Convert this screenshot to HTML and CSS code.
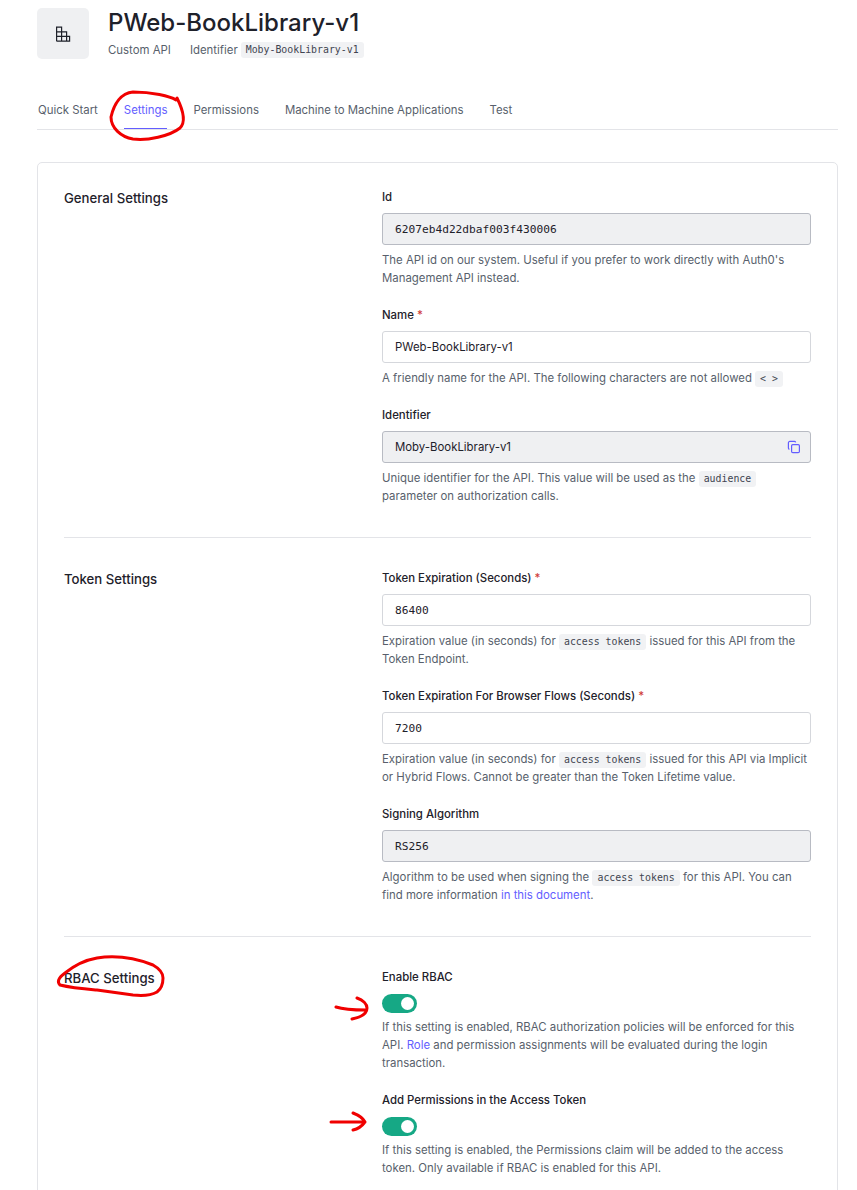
FILE: index.html
```html
<!DOCTYPE html>
<html lang="en">
<head>
    <meta charset="UTF-8">
    <meta name="viewport" content="width=device-width, initial-scale=1.0">
    <title>PWeb-BookLibrary-v1</title>
    <link rel="stylesheet" href="styles.css">
</head>
<body>
    <div class="page">
        <header class="api-header">
            <div class="api-icon">
                <svg width="18" height="18" viewBox="0 0 18 18" fill="none" stroke="#1e212a" stroke-width="1.2">
                    <path d="M2.6 16.2V2.2h5v14M2.6 6.8h10v9.4M2.6 11.4h13v4.8H2.6M7.6 6.8v9.4M12.6 6.8v9.4"/>
                </svg>
            </div>
            <div>
                <h1>PWeb-BookLibrary-v1</h1>
                <div class="api-meta">
                    <span class="api-type">Custom API</span>
                    <span>Identifier</span>
                    <code class="tag">Moby-BookLibrary-v1</code>
                </div>
            </div>
        </header>

        <nav class="tabs">
            <a>Quick Start</a>
            <a class="active">Settings</a>
            <a>Permissions</a>
            <a>Machine to Machine Applications</a>
            <a>Test</a>
        </nav>

        <main class="card">
            <section class="group">
                <h2>General Settings</h2>
                <div class="fields">
                    <div class="field">
                        <label>Id</label>
                        <div class="input readonly mono">6207eb4d22dbaf003f430006</div>
                        <p class="help">The API id on our system. Useful if you prefer to work directly with Auth0's Management API instead.</p>
                    </div>
                    <div class="field">
                        <label>Name <span class="req">*</span></label>
                        <div class="input">PWeb-BookLibrary-v1</div>
                        <p class="help">A friendly name for the API. The following characters are not allowed <code class="tag">&lt; &gt;</code></p>
                    </div>
                    <div class="field">
                        <label>Identifier</label>
                        <div class="input readonly">
                            Moby-BookLibrary-v1
                            <svg class="copy" width="14" height="14" viewBox="0 0 14 14" fill="none" stroke="#635dff" stroke-width="1.2">
                                <rect x="4.6" y="4.6" width="7.8" height="8" rx="1.2"/>
                                <path d="M2.4 9.4C1.8 9.2 1.4 8.7 1.4 8V2.8c0-.8.6-1.4 1.4-1.4h4.6c.6 0 1.1.4 1.3 1"/>
                            </svg>
                        </div>
                        <p class="help">Unique identifier for the API. This value will be used as the <code class="tag">audience</code> parameter on authorization calls.</p>
                    </div>
                </div>
            </section>

            <section class="group">
                <h2>Token Settings</h2>
                <div class="fields">
                    <div class="field">
                        <label>Token Expiration (Seconds) <span class="req">*</span></label>
                        <div class="input mono">86400</div>
                        <p class="help">Expiration value (in seconds) for <code class="tag">access tokens</code> issued for this API from the Token Endpoint.</p>
                    </div>
                    <div class="field">
                        <label>Token Expiration For Browser Flows (Seconds) <span class="req">*</span></label>
                        <div class="input mono">7200</div>
                        <p class="help">Expiration value (in seconds) for <code class="tag">access tokens</code> issued for this API via Implicit or Hybrid Flows. Cannot be greater than the Token Lifetime value.</p>
                    </div>
                    <div class="field">
                        <label>Signing Algorithm</label>
                        <div class="input readonly mono">RS256</div>
                        <p class="help">Algorithm to be used when signing the <code class="tag">access tokens</code> for this API. You can find more information <a class="link">in this document</a>.</p>
                    </div>
                </div>
            </section>

            <section class="group">
                <h2>RBAC Settings</h2>
                <div class="fields">
                    <div class="field">
                        <label>Enable RBAC</label>
                        <div class="toggle"></div>
                        <p class="help">If this setting is enabled, RBAC authorization policies will be enforced for this API. <a class="link">Role</a> and permission assignments will be evaluated during the login transaction.</p>
                    </div>
                    <div class="field">
                        <label>Add Permissions in the Access Token</label>
                        <div class="toggle"></div>
                        <p class="help">If this setting is enabled, the Permissions claim will be added to the access token. Only available if RBAC is enabled for this API.</p>
                    </div>
                </div>
            </section>
        </main>
    </div>

    <!-- hand drawn marks on top of the screenshot -->
    <svg class="marks" width="857" height="1190" viewBox="0 0 857 1190" fill="none" stroke="#f00000" stroke-width="3" stroke-linecap="round" stroke-linejoin="round">
        <path d="M176 100C170 96 152 92 133 92C121 93 114 104 111 117C111 128 121 137 133 139C147 141 170 136 180 128C186 122 184 112 177 98"/>
        <path d="M60 985C57 982 58 978 65 973C75 965 85 960 97 958C110 956 130 956 153 965C160 969 163 973 163 978C163 985 161 989 157 992C150 996 142 996 133 995L97 990C85 989 72 988 60 985"/>
        <path d="M336 1007C345 1010 354 1010 366 1010M357 998C363 1000 367 1004 367 1008C367 1013 362 1017 352 1019"/>
        <path d="M331 1122H365M353 1113C358 1115 363 1118 365 1122C362 1126 358 1129 353 1130"/>
    </svg>
</body>
</html>
```

FILE: styles.css
```css
* {
    margin: 0;
    padding: 0;
    box-sizing: border-box;
}

html, body {
    height: 100%;
    overflow: hidden;
}

body {
    font-family: 'Inter', sans-serif;
    background-color: #fff;
    color: #1e212a;
    position: relative;
}

.page {
    padding: 8px 19px 0 37px;
}

/* Cabecalho */
.api-header {
    display: flex;
    gap: 19px;
    height: 51px;
}

.api-icon {
    width: 52px;
    height: 51px;
    border-radius: 5px;
    background-color: #eff0f2;
    display: flex;
    justify-content: center;
    align-items: center;
}

h1 {
    font-size: 24px;
    font-weight: 500;
    line-height: 30px;
}

.api-meta {
    display: flex;
    align-items: center;
    font-size: 11.4px;
    color: #585f6c;
    margin-top: 4px;
}

.api-type {
    margin-right: 19px;
}

.tag {
    font-family: 'DejaVu Sans Mono', monospace;
    font-size: 9.9px;
    line-height: 16px;
    background-color: #f1f2f4;
    color: #3f4450;
    border-radius: 3px;
    padding: 0 5px;
    display: inline-block;
    vertical-align: middle;
}

.api-meta .tag {
    margin-left: 3px;
}

/* Abas */
.tabs {
    display: flex;
    gap: 26px;
    margin-top: 33px;
    padding-left: 1px;
    height: 38px;
    border-bottom: 1px solid #e3e4e8;
}

.tabs a {
    font-size: 11.4px;
    line-height: 18px;
    color: #585f6c;
    padding-top: 9px;
    height: 37px;
}

.tabs a.active {
    color: #635dff;
    border-bottom: 1px solid #635dff;
}

/* Card */
.card {
    margin-top: 32px;
    border: 1px solid #e3e4e8;
    border-radius: 5px;
    padding: 0 26px;
}

.group {
    display: grid;
    grid-template-columns: 318px 429px;
    padding: 31px 0 32px;
    border-bottom: 1px solid #e3e4e8;
}

.group:first-child {
    padding-top: 25px;
}

.group:last-child {
    border-bottom: none;
}

h2 {
    font-size: 13.2px;
    font-weight: 500;
    line-height: 18px;
    margin-top: 1px;
}

.fields {
    display: flex;
    flex-direction: column;
    gap: 19px;
}

label {
    display: block;
    font-size: 11.4px;
    font-weight: 500;
    line-height: 18px;
}

.req {
    color: #d03c38;
}

.input {
    height: 32px;
    margin-top: 7px;
    padding: 0 12px;
    border: 1px solid #d5d7dc;
    border-radius: 3px;
    font-size: 11.4px;
    display: flex;
    align-items: center;
    justify-content: space-between;
}

.input.readonly {
    background-color: #eff0f2;
    border-color: #b8bbc3;
}

.copy {
    margin-right: -3px;
}

.mono {
    font-family: 'DejaVu Sans Mono', monospace;
    font-size: 11.2px;
}

.help {
    font-size: 11.4px;
    line-height: 18px;
    color: #585f6c;
    margin-top: 6px;
}

.link {
    color: #635dff;
}

.toggle {
    width: 35px;
    height: 19px;
    margin-top: 8px;
    margin-bottom: -1px;
    border-radius: 10px;
    background-color: #16a885;
    position: relative;
}

.toggle::after {
    content: '';
    position: absolute;
    right: 3px;
    top: 3px;
    width: 13px;
    height: 13px;
    border-radius: 50%;
    background-color: #fff;
}

/* Marcas em vermelho por cima da pagina */
.marks {
    position: absolute;
    left: 0;
    top: 0;
    pointer-events: none;
}
```
